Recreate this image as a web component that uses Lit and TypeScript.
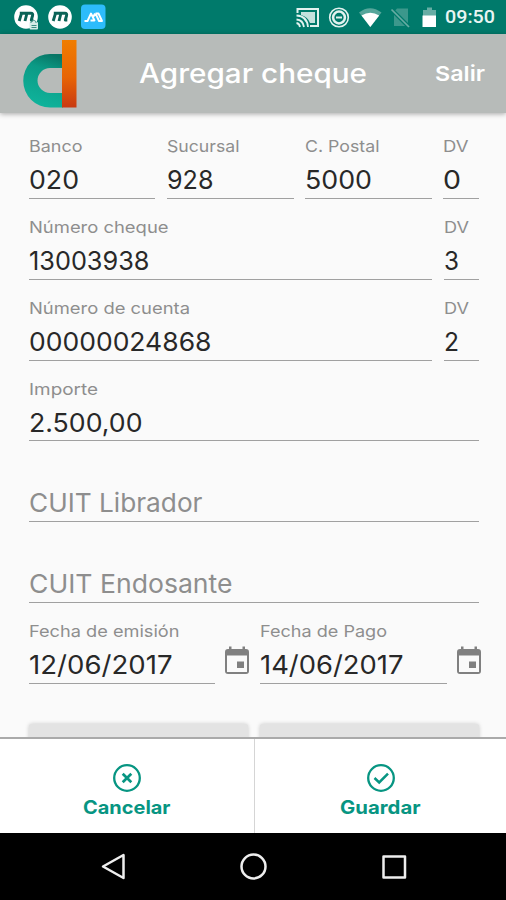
import { LitElement, html, svg, css } from "lit";
import { customElement, property } from "lit/decorators.js";

/** One line of text widened horizontally so that it fills `width` pixels. */
@customElement("wide-text")
class WideText extends LitElement {
  @property() text = "";
  @property({ type: Number }) width = 0;
  static styles = css`
    :host { display: block; white-space: pre; }
    span { display: inline-block; transform-origin: 0 50%; }
  `;
  updated() {
    const el = this.renderRoot.querySelector("span") as HTMLElement;
    el.style.transform = "none";
    this.style.width = `${this.width}px`;
    el.style.transform = `scaleX(${this.width / el.getBoundingClientRect().width})`;
  }
  render() {
    return html`<span>${this.text}</span>`;
  }
}

type Field = { label?: string; lw?: number; value?: string; vw?: number; hint?: string; dv?: boolean; date?: boolean };

const rows: Field[][] = [
  [
    { label: "Banco", lw: 53.5, value: "020", vw: 50 },
    { label: "Sucursal", lw: 72.5, value: "928", vw: 46.5 },
    { label: "C. Postal", lw: 74.5, value: "5000", vw: 67 },
    { label: "DV", lw: 25.5, value: "0", vw: 18, dv: true },
  ],
  [
    { label: "Número cheque", lw: 139.5, value: "13003938", vw: 120.5 },
    { label: "DV", lw: 25, value: "3", vw: 15, dv: true },
  ],
  [
    { label: "Número de cuenta", lw: 161, value: "00000024868", vw: 182.5 },
    { label: "DV", lw: 25, value: "2", vw: 15, dv: true },
  ],
  [{ label: "Importe", lw: 69, value: "2.500,00", vw: 113.5 }],
  [{ hint: "CUIT Librador", vw: 173.5 }],
  [{ hint: "CUIT Endosante", vw: 203.5 }],
  [
    { label: "Fecha de emisión", lw: 150.5, value: "12/06/2017", vw: 143.5, date: true },
    { label: "Fecha de Pago", lw: 127, value: "14/06/2017", vw: 143.5, date: true },
  ],
];

const calendar = html`<svg class="cal" width="26" height="30" viewBox="0 0 26 30">
  <path d="M4 3h18a3 3 0 0 1 3 3v19a3 3 0 0 1-3 3H4a3 3 0 0 1-3-3V6a3 3 0 0 1 3-3zM3 9.500V26H23V9.500z" fill="#808080" fill-rule="evenodd"/>
  <path d="M5 .500h2.500V4H5zM18.500 .500H21V4h-2.500zM13 15.500h7V22h-7z" fill="#808080"/></svg>`;

const mShape = svg`<path d="M5.200 17L7.500 9.300M11 17L12.900 9.500M5.800 9.300H17Q19.200 9.300 18.600 11.500L17.300 16H19.300" fill="none" stroke="#0b6357" stroke-width="2.900" stroke-linejoin="round"/>`;

@customElement("app-root")
class AppRoot extends LitElement {
  static styles = css`
    :host { display: flex; flex-direction: column; width: 506px; height: 900px; overflow: hidden;
      background: #fafafa; font-family: Inter, "Open Sans", sans-serif; color: #282828; }
    svg { display: block; flex: none; }
    .status { height: 34px; flex: none; background: #007a6b; display: flex; align-items: center;
      padding: 0 11px 0 14px; box-sizing: border-box; }
    .note { margin-right: 9px; }
    .gap { flex: 1; }
    .clock { font: 500 19px/36px Roboto, sans-serif; color: #e9f5f3; margin-left: 8px; }
    .head { height: 79px; flex: none; background: #b7bbb9; display: flex; box-sizing: border-box;
      padding: 0 21px 0 23px; color: #fff; box-shadow: 0 1px 5px #0005; z-index: 1; }
    .logo { margin-top: 5px; }
    .title { font-size: 26.500px; line-height: 79px; font-weight: 500; margin-left: 62px; }
    .exit { font-size: 20.500px; line-height: 79px; font-weight: 600; margin-left: auto; }
    .form { flex: 1; min-height: 0; overflow: hidden; padding: 5.200px 27px 0 28.500px; }
    .row { display: flex; height: 80.800px; gap: 11.500px; }
    .cell { flex: 1; min-width: 0; box-sizing: border-box; border-bottom: 1.500px solid #a0a0a0;
      height: 80.800px; padding-top: 17px; }
    .cell.dv { flex: none; width: 35.500px; }
    .label { font-size: 16.500px; line-height: 23px; height: 23px; color: #8e8e8e; }
    .value { font-size: 26px; line-height: 34px; margin-top: 5px; }
    .hint { font-size: 26px; line-height: 34px; margin-top: 28px; color: #8e8e8e; }
    .date { flex: 1; display: flex; }
    .row.dates { gap: 10px; margin-right: -3px; }
    .cal { margin: 43px 0 0 9.500px; }
    .buttons { display: flex; gap: 11.500px; margin-top: 40px; }
    .raised { flex: 1; height: 44px; background: #e3e3e3; border-radius: 3px; box-shadow: 0 0 4px #0003; }
    .foot { height: 96px; flex: none; display: flex; background: #fff; border-top: 2px solid #aaa;
      box-sizing: border-box; z-index: 1; }
    .act { width: 254px; flex: none; display: flex; flex-direction: column; align-items: center; color: #079582;
      font-size: 18.500px; line-height: 24px; font-weight: 700; padding: 24px 0 0; box-sizing: border-box; }
    .act + .act { flex: 1; border-left: 1px solid #d5d5d5; }
    .act wide-text { margin-top: 2px; }
    .nav { height: 67px; flex: none; background: #000; }
  `;

  cell(f: Field) {
    const box = html`<div class="cell ${f.dv ? "dv" : ""}">
      ${f.hint
        ? html`<wide-text class="hint" text=${f.hint} width=${f.vw}></wide-text>`
        : html`<wide-text class="label" text=${f.label} width=${f.lw}></wide-text>
            <wide-text class="value" text=${f.value} width=${f.vw}></wide-text>`}
    </div>`;
    return f.date ? html`<div class="date">${box}${calendar}</div>` : box;
  }

  render() {
    return html`
      <div class="status">
        <svg class="note" width="25" height="26" viewBox="0 0 25 26"><circle cx="12" cy="13" r="11.800" fill="#fff"/>${mShape}
          <rect x="15.500" y="18" width="8.500" height="7.500" rx="1" fill="#d5ebe7"/><path d="M17 19v-1.500q2.500-2.500 5 0V19M17.500 21.500h5M17.500 23.500h5" fill="none" stroke="#3d8f83" stroke-width="1"/></svg>
        <svg class="note" width="24" height="26" viewBox="0 0 24 26"><circle cx="12" cy="13" r="11.800" fill="#fff"/>${mShape}</svg>
        <svg width="25" height="26" viewBox="0 0 25 26"><rect width="24.500" height="24.500" y=".500" rx="4" fill="#2dbcfb"/>
          <path d="M3.500 17H6.500L10 9.500L13.500 16.500H9.500M14 9.500L12.500 12.500M14.500 9.500L18 17H21L17.500 9.500H14.500" fill="none" stroke="#fff" stroke-width="1.900" stroke-linejoin="round"/></svg>
        <span class="gap"></span>
        <svg width="141" height="34" viewBox="296 0 141 34">
          <path d="M297.500 13V9H318V26H310" fill="none" stroke="#e2f2ef" stroke-width="2"/>
          <path d="M301 12h14v11h-5q-2-6-9-8z" fill="#c5e2de"/>
          <path d="M296.500 15.500Q307 16 308 27M296.500 19.500Q303 20 304 27M296.500 23Q299.500 23.500 300 27" fill="none" stroke="#e2f2ef" stroke-width="1.800"/>
          <circle cx="339" cy="17.500" r="9.300" fill="none" stroke="#e2f2ef" stroke-width="1.600"/>
          <circle cx="339" cy="17.500" r="5.900" fill="none" stroke="#e2f2ef" stroke-width="2.500"/><path d="M336 17.500h6" stroke="#e2f2ef" stroke-width="2"/>
          <path d="M359 12.500Q370 4 381.500 12.500L370.300 27z" fill="#56a69b"/><path d="M361.500 15.500Q370.300 10 379.200 15.500L370.300 27z" fill="#fff"/>
          <path d="M397 8.500h11V26h-14V12z" fill="#3c988c"/><path d="M391.500 9.500L409 27" stroke="#007a6b" stroke-width="4"/><path d="M391.500 9.500L409 27" stroke="#68ada4" stroke-width="1.700"/>
          <path d="M427 7.500h5V10h4v6h-13v-6h4z" fill="#67ada4"/><path d="M422.500 15.500h13.500V27h-13.500z" fill="#fff"/>
        </svg>
        <wide-text class="clock" text="09:50" width="50"></wide-text>
      </div>
      <div class="head">
        <svg class="logo" width="54" height="69" viewBox="0 0 54 69">
          <defs>
            <linearGradient id="g" x1=".7" y1="0" x2=".45" y2="1"><stop offset="0" stop-color="#087565"/><stop offset=".3" stop-color="#0b9a85"/><stop offset="1" stop-color="#0fb49c"/></linearGradient>
            <linearGradient id="o" x2="0" y2="1"><stop offset="0" stop-color="#f07d00"/><stop offset=".55" stop-color="#e86405"/><stop offset="1" stop-color="#c83a12"/></linearGradient>
          </defs>
          <path d="M40 15H27a26.500 26.500 0 0 0 0 53.500H40V54H27a12.500 12.500 0 0 1 0-25H40z" fill="url(#g)"/>
          <path d="M39 1H53.500V68.500H39z" fill="url(#o)"/>
        </svg>
        <wide-text class="title" text="Agregar cheque" width="228"></wide-text>
        <wide-text class="exit" text="Salir" width="50"></wide-text>
      </div>
      <div class="form">
        ${rows.map((r) => html`<div class="row ${r[0].date ? "dates" : ""}">${r.map((f) => this.cell(f))}</div>`)}
        <div class="buttons"><div class="raised"></div><div class="raised"></div></div>
      </div>
      <div class="foot">
        <div class="act">
          <svg width="30" height="30" viewBox="0 0 30 30" fill="none" stroke="#079582"><circle cx="15" cy="15" r="12.800" stroke-width="2.300"/><path d="M10.700 10.700l8.600 8.600M19.300 10.700l-8.600 8.600" stroke-width="2.700"/></svg>
          <wide-text text="Cancelar" width="87.5"></wide-text>
        </div>
        <div class="act">
          <svg width="30" height="30" viewBox="0 0 30 30" fill="none" stroke="#079582"><circle cx="15" cy="15" r="12.800" stroke-width="2.300"/><path d="M8.500 15l4.700 4.500L22 10.700" stroke-width="2.500"/></svg>
          <wide-text text="Guardar" width="80.5"></wide-text>
        </div>
      </div>
      <div class="nav">
        <svg width="506" height="67" viewBox="0 833 506 67" fill="none" stroke="#eee" stroke-width="2.500" stroke-linejoin="round">
          <path d="M123.500 855V878L103 866.500z"/><circle cx="253.500" cy="866.500" r="12"/><rect x="383.500" y="856.500" width="21.500" height="21"/>
        </svg>
      </div>`;
  }
}
